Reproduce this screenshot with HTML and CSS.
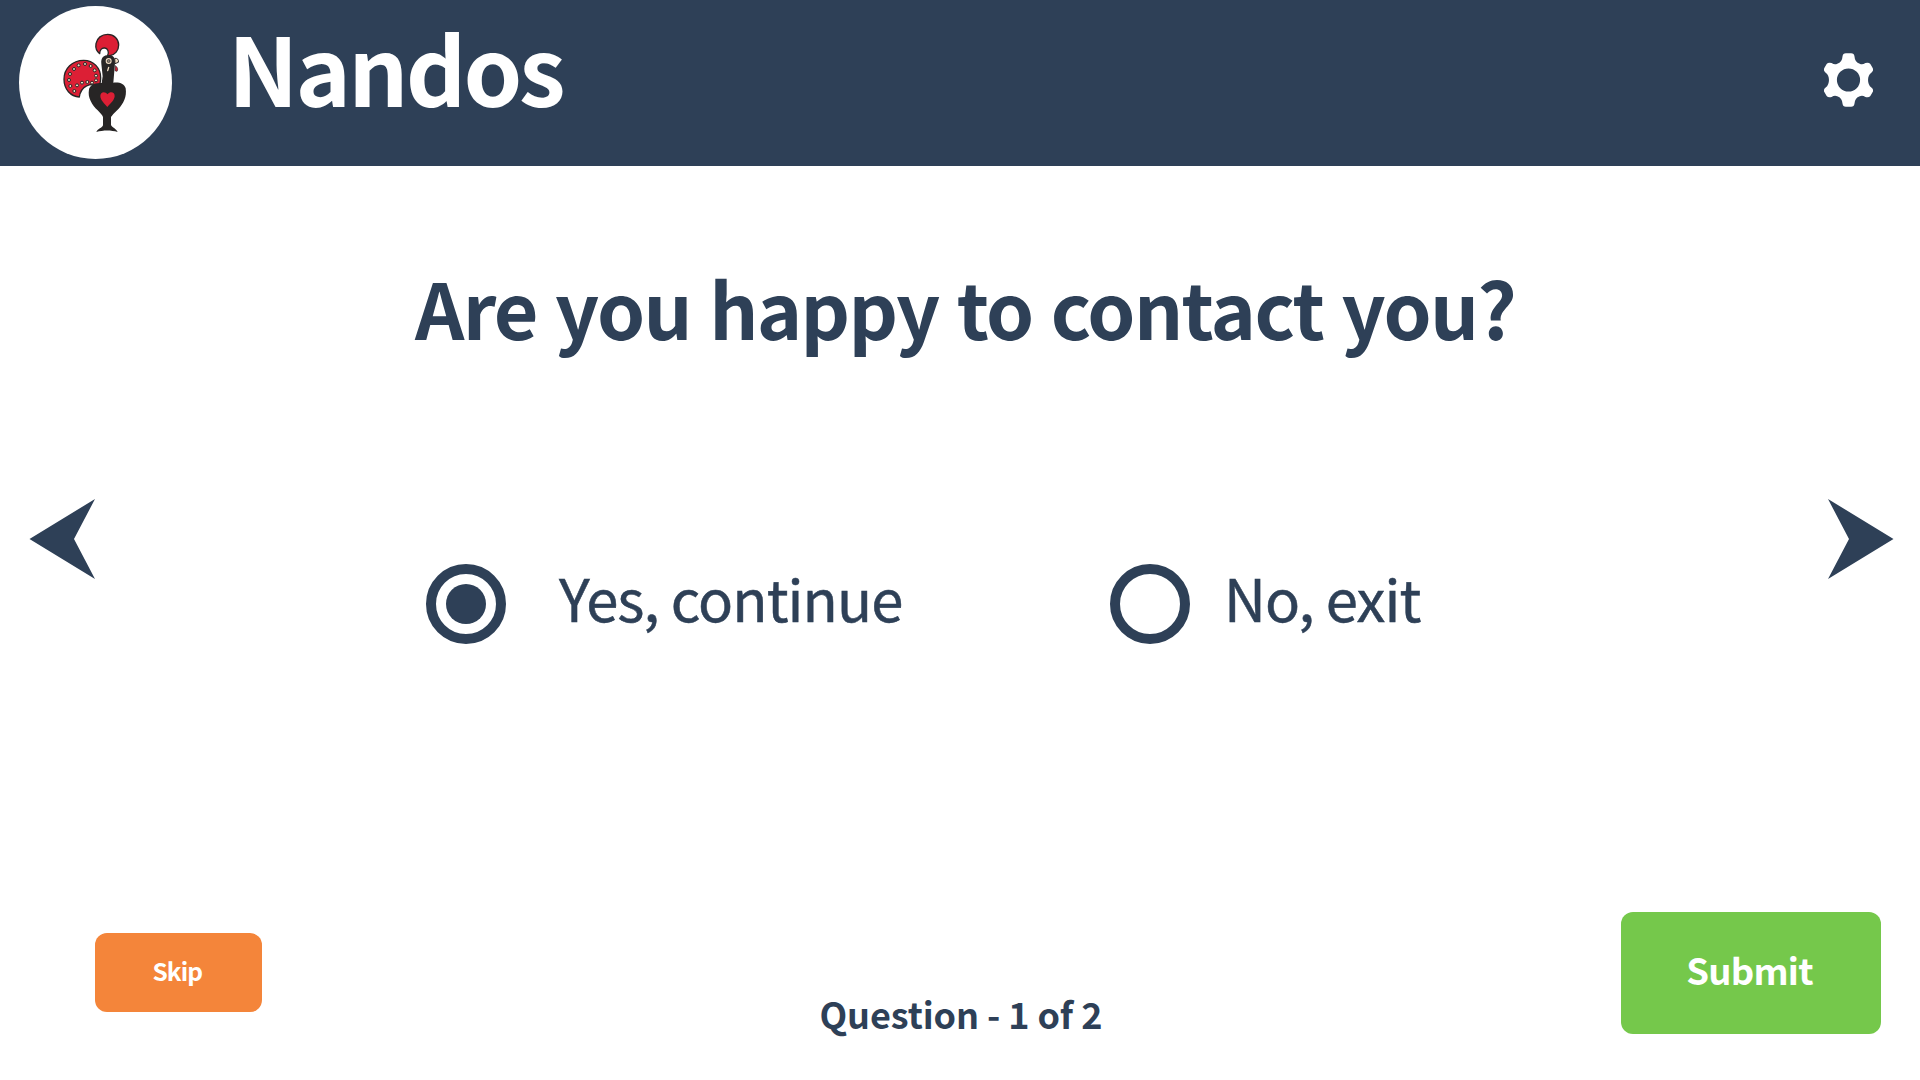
FILE: index.html
```html
<!DOCTYPE html>
<html lang="en">
<head>
<meta charset="utf-8">
<title>Nandos</title>
<link rel="stylesheet" href="styles.css">
</head>
<body>
<header class="header">
  <div class="logo">
    <svg viewBox="0 0 240 345" width="80" height="115" aria-hidden="true">
      <g fill="#dc1f35" stroke="#272525" stroke-width="4" stroke-linejoin="round">
        <path d="M73 216C47 215 27 193 27 163C27 130 52 106 86 106C116 106 137 129 137 158C137 173 134 181 129 184C108 173 78 180 73 216Z"/>
        <path d="M134 86C125 79 121 68 123 56C126 39 140 28 158 28C177 28 191 42 191 60C191 76 180 90 164 92L158 91C163 80 158 70 149 69C140 68 134 75 134 86Z"/>
      </g>
      <g fill="#f3dfc5" stroke="#272525" stroke-width="3">
        <circle cx="57" cy="132" r="4.5"/><circle cx="71" cy="121" r="4.5"/><circle cx="90" cy="117" r="4.5"/><circle cx="107" cy="123" r="4.5"/><circle cx="119" cy="136" r="4.5"/><circle cx="123" cy="152" r="4.5"/><circle cx="123" cy="166" r="4.5"/><circle cx="45" cy="147" r="4.5"/><circle cx="42" cy="165" r="4.5"/><circle cx="46" cy="183" r="4.5"/><circle cx="58" cy="198" r="4.5"/><circle cx="66" cy="181" r="4.5"/><circle cx="81" cy="173" r="4.5"/><circle cx="97" cy="171" r="4.5"/><circle cx="111" cy="173" r="4.5"/>
      </g>
      <path fill="#272525" d="M140 174L143 154L139 116C137 98 147 90 160 90C174 89 181 98 180 114L175 173C195 171 208 177 212 190C216 216 205 236 191 251L175 267L168 276V300C172 308 183 310 188 321C168 315 145 315 124 321C129 311 141 309 144 301V276C141 264 117 251 107 228C101 216 100 207 102 193C105 181 118 172 140 174Z"/>
      <path fill="#dc1f35" d="M157 246C149 236 136 226 136 213C136 201 149 197 158 208C166 197 180 202 179 214C178 227 165 236 157 246Z"/>
      <path fill="#dc1f35" stroke="#272525" stroke-width="2" d="M181 122C188 126 190 134 186 139L180 137Z"/>
      <path fill="#f3dfc5" stroke="#272525" stroke-width="3" d="M179 100C187 99 192 104 190 112L180 116Z"/>
      <circle cx="161" cy="108" r="9" fill="#f3dfc5"/>
      <circle cx="161" cy="108" r="4.5" fill="#8b8175" stroke="#272525" stroke-width="2"/>
      <path d="M161 127L158 137" stroke="#f3dfc5" stroke-width="4" stroke-linecap="round"/>
    </svg>
  </div>
  <h1 class="brand">Nandos</h1>
  <button class="settings" aria-label="Settings">
    <svg viewBox="72 39 148 162" width="49" height="54">
      <path fill="#fff" fill-rule="evenodd" d="M138 39H154Q163 39 164 48Q165 66 180 71Q188 75 197 69Q207 66 212 72L219 84Q223 92 215 98Q205 105 205 120Q205 135 215 143Q223 149 219 156L212 168Q207 174 197 171Q188 165 180 169Q165 174 164 192Q163 201 154 201H138Q129 201 128 192Q127 174 112 169Q104 165 95 171Q85 174 80 168L73 156Q69 149 77 143Q87 135 87 120Q87 105 77 98Q69 92 73 84L80 72Q85 66 95 69Q104 75 112 71Q127 66 128 48Q129 39 138 39ZM146 85A35 35 0 1 0 146 155A35 35 0 1 0 146 85Z"/>
    </svg>
  </button>
</header>
<main class="survey">
  <h2 class="question">Are you happy to contact you?</h2>
  <div class="stage">
    <button class="arrow" aria-label="Previous">
      <svg viewBox="0 0 66 80" width="66" height="80"><path d="M0.5 40L66 0L45 40L66 80Z"/></svg>
    </button>
    <div class="options">
      <label class="option option-yes"><span class="radio checked"></span><span class="label">Yes, continue</span></label>
      <label class="option option-no"><span class="radio"></span><span class="label">No, exit</span></label>
    </div>
    <button class="arrow" aria-label="Next">
      <svg viewBox="0 0 66 80" width="66" height="80"><path d="M65.5 40L0 0L21 40L0 80Z"/></svg>
    </button>
  </div>
</main>
<footer class="footer">
  <button class="btn skip">Skip</button>
  <p class="progress">Question - 1 of 2</p>
  <button class="btn submit">Submit</button>
</footer>
</body>
</html>
```
FILE: styles.css
```css
* { box-sizing: border-box; margin: 0; padding: 0; }
body {
  width: 1920px;
  height: 1080px;
  display: flex;
  flex-direction: column;
  overflow: hidden;
  background: #fff;
  color: #2e4057;
  font-family: "Noto Sans CJK SC", "Noto Sans", sans-serif;
  white-space: nowrap;
}
button { border: 0; background: none; font: inherit; color: inherit; }
svg { display: block; }

.header {
  display: flex;
  align-items: flex-start;
  height: 166px;
  padding: 0 47px 0 19px;
  background: #2e4057;
  color: #fff;
}
.logo {
  display: grid;
  place-items: center;
  width: 153px;
  height: 153px;
  margin-top: 6.4px;
  padding-right: 2px;
  border-radius: 50%;
  background: #fff;
}
.brand {
  margin: 0 auto 0 56px;
  font-size: 94px;
  font-weight: 700;
  line-height: 133px;
  letter-spacing: -2.8px;
}
.settings { margin-top: 53px; }

.survey { height: 746px; padding-top: 90px; }
.question {
  padding-left: 415px;
  font-size: 77px;
  font-weight: 700;
  line-height: 101px;
  letter-spacing: -1.65px;
  word-spacing: 2.4px;
}
.stage {
  display: flex;
  height: 145px;
  margin-top: 142px;
  padding: 0 26px 0 29px;
}
.arrow { width: 66px; height: 80px; fill: #2e4057; }
.options {
  display: grid;
  grid-template-columns: 684px 1fr;
  align-items: end;
  flex: 1;
  padding-left: 331px;
}
.option { display: flex; align-items: flex-start; }
.option-yes { gap: 53px; }
.option-no { gap: 34px; }
.radio {
  display: grid;
  width: 80px;
  height: 80px;
  padding: 10px;
  border: 10px solid #2e4057;
  border-radius: 50%;
}
.checked::after {
  content: "";
  border-radius: 50%;
  background: #2e4057;
}
.label {
  font-size: 58px;
  line-height: 66px;
  letter-spacing: -0.95px;
  -webkit-text-stroke: 0.5px #2e4057;
}

.footer {
  display: flex;
  align-items: flex-start;
  height: 168px;
  padding: 0 39px 0 95px;
}
.btn { border-radius: 12px; color: #fff; font-weight: 700; }
.skip {
  width: 166.5px;
  height: 78.5px;
  margin-top: 21.2px;
  padding: 0 2px 3px 0;
  background: #f4853a;
  font-size: 24.5px;
  letter-spacing: -0.9px;
}
.progress {
  margin: 75px auto 0 558px;
  font-size: 36px;
  font-weight: 700;
  line-height: 52px;
  letter-spacing: -0.1px;
}
.submit {
  width: 260px;
  height: 122px;
  padding: 0 3px 8px 0;
  background: #75c84b;
  font-size: 36.5px;
  letter-spacing: -0.76px;
}
```
